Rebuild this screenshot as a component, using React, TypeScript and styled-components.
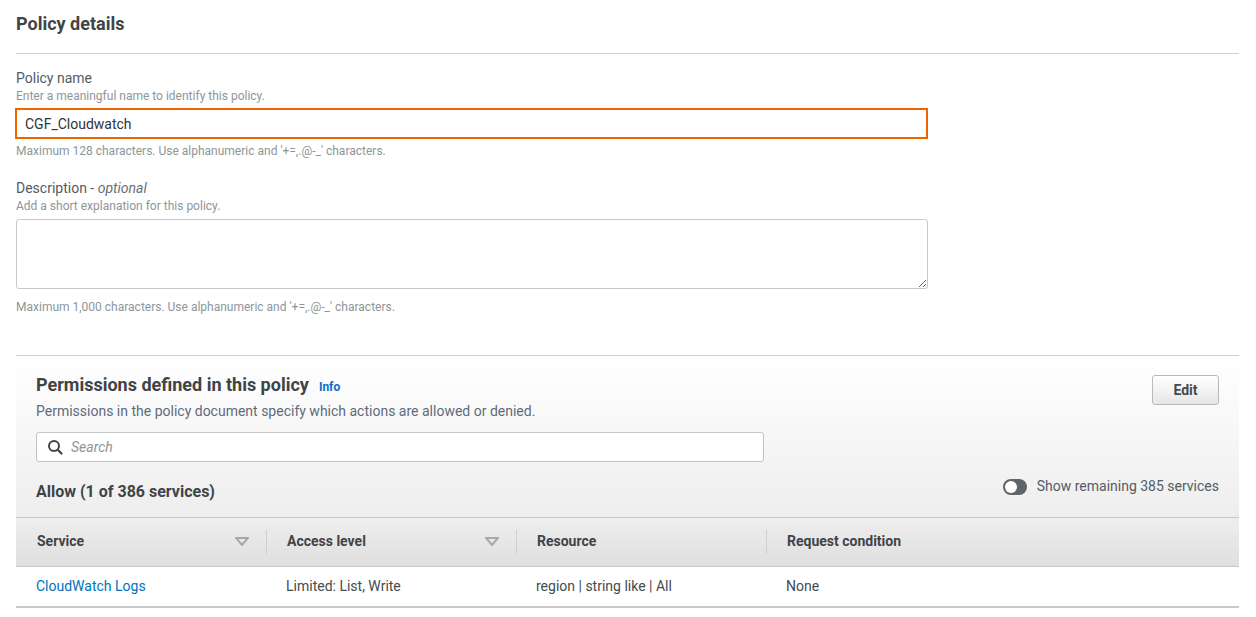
import React from "react";
import styled, { createGlobalStyle } from "styled-components";

const Global = createGlobalStyle`
  html, body { margin: 0; padding: 0; background: #fff; }
  body { font-family: Roboto, "Liberation Sans", sans-serif; color: #16191f; overflow: hidden; }
  * { box-sizing: border-box; }
`;

const Page = styled.div`
  width: 1256px;
  height: 617px;
  padding: 0 17px 0 16px;
  overflow: hidden;
`;

const SectionTitle = styled.h2`
  margin: 0;
  height: 54px;
  padding-top: 13px;
  font-size: 18px;
  line-height: 22px;
  font-weight: 700;
  color: #3f4447;
  border-bottom: 1px solid #d0d0d0;
`;

const Form = styled.div`
  display: flex;
  flex-direction: column;
  width: 912px;
  padding-top: 16px;
  height: 301px;
`;

const Field = styled.div`
  display: flex;
  flex-direction: column;
  margin-bottom: 21px;
`;

const Label = styled.label`
  font-size: 14px;
  line-height: 17px;
  color: #545b64;
  em { font-style: italic; color: #687078; }
`;

const Hint = styled.div<{ $after?: boolean }>`
  font-size: 12px;
  line-height: 15px;
  color: #8d9699;
  margin-top: ${(p) => (p.$after ? "5px" : "2px")};
  margin-bottom: ${(p) => (p.$after ? "0" : "3px")};
`;

const NameInput = styled.input`
  height: 31px;
  width: 913px;
  margin: 1px 0 0 -1px;
  border: 2px solid #f06400;
  background: #fff;
  padding: 0 8px;
  font: 14px Roboto, sans-serif;
  color: #2f3437;
  outline: none;
`;

const Area = styled.textarea`
  display: block;
  width: 912px;
  height: 70px;
  margin-top: 2px;
  margin-bottom: 6px;
  border: 1px solid #c8c8c8;
  border-radius: 3px;
  background: #fff;
  resize: vertical;
  outline: none;
`;

const Panel = styled.section`
  border-top: 1px solid #d0d0d0;
  border-bottom: 2px solid #c8c8c8;
`;

const PanelHead = styled.div`
  height: 161px;
  padding: 19px 20px 0;
  background: linear-gradient(#ffffff 0%, #eeeeee 100%);
  display: flex;
  justify-content: space-between;
`;

const HeadLeft = styled.div`
  display: flex;
  flex-direction: column;
  width: 728px;
`;

const HeadRight = styled.div`
  display: flex;
  flex-direction: column;
  justify-content: space-between;
  align-items: flex-end;
  padding-bottom: 22px;
`;

const TitleRow = styled.div`
  display: flex;
  align-items: baseline;
  gap: 10px;
`;

const PanelTitle = styled.h3`
  margin: 0;
  font-size: 18px;
  line-height: 20px;
  font-weight: 700;
  color: #3f4447;
`;

const Info = styled.a`
  font-size: 12px;
  font-weight: 700;
  color: #0d6fc4;
`;

const Desc = styled.p`
  margin: 8px 0 0;
  font-size: 14px;
  line-height: 17px;
  color: #5f6b7a;
`;

const SearchBox = styled.div`
  display: flex;
  align-items: center;
  gap: 8px;
  height: 30px;
  margin-top: 12px;
  padding: 0 10px;
  background: #fff;
  border: 1px solid #bfc4c7;
  border-radius: 3px;
`;

const SearchPlaceholder = styled.span`
  font-size: 14px;
  font-style: italic;
  color: #8d9699;
`;

const AllowTitle = styled.h4`
  margin: 20px 0 0;
  font-size: 16px;
  line-height: 19px;
  font-weight: 700;
  color: #3f4447;
`;

const EditButton = styled.button`
  width: 67px;
  height: 30px;
  border: 1px solid #b5babd;
  border-radius: 3px;
  background: linear-gradient(#ffffff, #e6e6e6);
  font: 700 14px Roboto, sans-serif;
  color: #444b4f;
  padding: 0;
`;

const ToggleRow = styled.div`
  display: flex;
  align-items: center;
  gap: 10px;
  font-size: 14px;
  line-height: 17px;
  color: #545b64;
`;

const Track = styled.span`
  display: flex;
  align-items: center;
  width: 24px;
  height: 16px;
  padding: 2px;
  border-radius: 8px;
  background: #5f6468;
`;

const Knob = styled.span`
  width: 12px;
  height: 12px;
  border-radius: 50%;
  background: #fff;
`;

const Columns = styled.div`
  display: grid;
  grid-template-columns: 250px 250px 250px 1fr;
`;

const HeaderRow = styled(Columns)`
  height: 50px;
  align-items: center;
  border-top: 1px solid #c8c8c8;
  border-bottom: 1px solid #c8c8c8;
  background: linear-gradient(#eeeeee, #dfdfdf);
`;

const HeaderCell = styled.div<{ $divider?: boolean }>`
  display: flex;
  align-items: center;
  justify-content: space-between;
  height: 24px;
  padding: 0 17px 2px ${(p) => (p.$divider ? "20px" : "21px")};
  font-size: 14px;
  font-weight: 700;
  color: #3f4447;
  border-left: ${(p) => (p.$divider ? "1px solid #cfcfcf" : "0")};
`;

const Row = styled(Columns)`
  height: 39px;
  padding-bottom: 2px;
  align-items: center;
  font-size: 14px;
  color: #444b4f;
`;

const Cell = styled.div`
  padding-left: 20px;
`;

const ServiceLink = styled.a`
  color: #0073bb;
`;

const SortArrow = () => (
  <svg width="14" height="9" viewBox="0 0 14 9" aria-hidden="true">
    <path d="M1 1h12L7 8z" fill="none" stroke="#a3a9ab" strokeWidth="2" strokeLinejoin="miter" />
  </svg>
);

const SearchIcon = () => (
  <svg width="16" height="16" viewBox="0 0 16 16" aria-hidden="true">
    <circle cx="7" cy="7" r="5" fill="none" stroke="#3f4549" strokeWidth="2" />
    <path d="M10.7 10.7 14.5 14.5" stroke="#3f4549" strokeWidth="2.2" strokeLinecap="round" />
  </svg>
);

export default function App() {
  return (
    <Page>
      <Global />
      <SectionTitle>Policy details</SectionTitle>
      <Form>
        <Field>
          <Label>Policy name</Label>
          <Hint>Enter a meaningful name to identify this policy.</Hint>
          <NameInput readOnly value="CGF_Cloudwatch" />
          <Hint $after>Maximum 128 characters. Use alphanumeric and '+=,.@-_' characters.</Hint>
        </Field>
        <Field>
          <Label>
            Description - <em>optional</em>
          </Label>
          <Hint>Add a short explanation for this policy.</Hint>
          <Area readOnly />
          <Hint $after>Maximum 1,000 characters. Use alphanumeric and '+=,.@-_' characters.</Hint>
        </Field>
      </Form>
      <Panel>
        <PanelHead>
          <HeadLeft>
            <TitleRow>
              <PanelTitle>Permissions defined in this policy</PanelTitle>
              <Info>Info</Info>
            </TitleRow>
            <Desc>Permissions in the policy document specify which actions are allowed or denied.</Desc>
            <SearchBox>
              <SearchIcon />
              <SearchPlaceholder>Search</SearchPlaceholder>
            </SearchBox>
            <AllowTitle>Allow (1 of 386 services)</AllowTitle>
          </HeadLeft>
          <HeadRight>
            <EditButton>Edit</EditButton>
            <ToggleRow>
              <Track>
                <Knob />
              </Track>
              Show remaining 385 services
            </ToggleRow>
          </HeadRight>
        </PanelHead>
        <HeaderRow>
          <HeaderCell>
            Service
            <SortArrow />
          </HeaderCell>
          <HeaderCell $divider>
            Access level
            <SortArrow />
          </HeaderCell>
          <HeaderCell $divider>Resource</HeaderCell>
          <HeaderCell $divider>Request condition</HeaderCell>
        </HeaderRow>
        <Row>
          <Cell>
            <ServiceLink>CloudWatch Logs</ServiceLink>
          </Cell>
          <Cell>Limited: List, Write</Cell>
          <Cell>region | string like | All</Cell>
          <Cell>None</Cell>
        </Row>
      </Panel>
    </Page>
  );
}
